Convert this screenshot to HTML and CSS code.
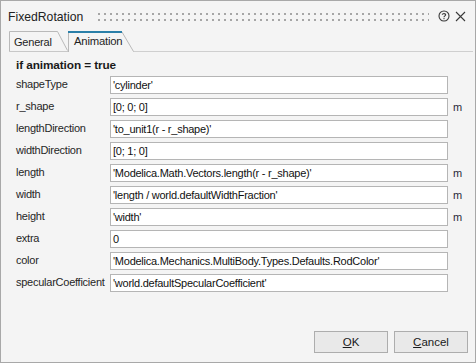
FILE: index.html
```html
<!DOCTYPE html>
<html>
<head>
<meta charset="utf-8">
<link rel="stylesheet" href="styles.css">
</head>
<body>
<div class="window">
  <div class="titlebar">
    <span class="title">FixedRotation</span>
    <div class="grip"></div>
    <svg class="icon help" width="12" height="12" viewBox="0 0 12 12">
      <circle cx="6" cy="6" r="5" fill="none" stroke="#3a3a3a" stroke-width="1.1"/>
      <path d="M4.3 4.7 C4.3 3.2 7.7 3.2 7.7 4.8 C7.7 5.9 6 5.9 6 7.2" fill="none" stroke="#3a3a3a" stroke-width="1.1"/>
      <rect x="5.45" y="8.1" width="1.1" height="1.1" fill="#3a3a3a"/>
    </svg>
    <svg class="icon close" width="11" height="11" viewBox="0 0 11 11">
      <path d="M1 1 L10 10 M10 1 L1 10" stroke="#3a3a3a" stroke-width="1.1"/>
    </svg>
  </div>
  <div class="tabstrip">
    <div class="tab tab-general">
      <svg class="tab-shape" width="59" height="20" viewBox="0 0 59 20">
        <path d="M0.5 20 L0.5 0.5 L48.5 0.5 L58.5 19.5" fill="#f4f4f4" stroke="#b9b9b9"/>
      </svg>
      <span class="tab-label">General</span>
    </div>
    <div class="tab tab-anim">
      <svg class="tab-shape" width="66" height="21" viewBox="0 0 66 21">
        <path d="M0.5 21 L0.5 1 L54 1 L65.5 20.5 L66 20.5" fill="#f4f4f4" stroke="#b9b9b9"/>
        <path d="M0 1 L54 1" stroke="#2a7fa8" stroke-width="2"/>
      </svg>
      <span class="tab-label">Animation</span>
    </div>
    <div class="tab-rest"></div>
  </div>
  <div class="panel">
    <div class="heading">if animation = true</div>
    <div class="grid">
      <div class="label">shapeType</div><div class="field">'cylinder'</div><div class="unit"></div>
      <div class="label">r_shape</div><div class="field">[0; 0; 0]</div><div class="unit">m</div>
      <div class="label">lengthDirection</div><div class="field">'to_unit1(r - r_shape)'</div><div class="unit"></div>
      <div class="label">widthDirection</div><div class="field">[0; 1; 0]</div><div class="unit"></div>
      <div class="label">length</div><div class="field">'Modelica.Math.Vectors.length(r - r_shape)'</div><div class="unit">m</div>
      <div class="label">width</div><div class="field">'length / world.defaultWidthFraction'</div><div class="unit">m</div>
      <div class="label">height</div><div class="field">'width'</div><div class="unit">m</div>
      <div class="label">extra</div><div class="field">0</div><div class="unit"></div>
      <div class="label">color</div><div class="field">'Modelica.Mechanics.MultiBody.Types.Defaults.RodColor'</div><div class="unit"></div>
      <div class="label">specularCoefficient</div><div class="field">'world.defaultSpecularCoefficient'</div><div class="unit"></div>
    </div>
  </div>
  <div class="footer">
    <button class="btn"><u>O</u>K</button>
    <button class="btn"><u>C</u>ancel</button>
  </div>
</div>
</body>
</html>
```
FILE: styles.css
```css
html, body {
  margin: 0;
  padding: 0;
  background: #f4f4f4;
}
.window {
  box-sizing: border-box;
  width: 476px;
  height: 363px;
  border: 1px solid #a8a8a8;
  background: #f4f4f4;
  display: flex;
  flex-direction: column;
  font-family: "Liberation Sans", Arial, sans-serif;
  color: #1f1f1f;
}
.titlebar {
  height: 30px;
  display: flex;
  align-items: center;
  padding: 0 9px 0 7px;
}
.title {
  font-size: 12.2px;
  color: #222;
  padding-top: 2px;
}
.grip {
  width: 334px;
  height: 8px;
  margin-left: 15px;
  margin-top: 1px;
  background-image:
    linear-gradient(to bottom, transparent 2px, #f4f4f4 2px),
    linear-gradient(to right, #a6a6a6 2px, transparent 2px);
  background-size: 6px 6px, 6px 6px;
}
.icon {
  display: block;
  flex: none;
}
.help {
  margin-left: 9px;
}
.close {
  margin-left: 5px;
}
.tabstrip {
  display: flex;
  height: 21px;
  padding-left: 8px;
  align-items: flex-end;
}
.tab {
  position: relative;
  font-size: 11px;
  letter-spacing: -0.2px;
}
.tab-shape {
  position: absolute;
  left: 0;
  bottom: 0;
  display: block;
}
.tab-label {
  position: relative;
}
.tab-general {
  width: 59px;
  height: 20px;
  box-sizing: border-box;
  padding: 4px 0 0 5px;
  border-bottom: 1px solid #c8c8c8;
}
.tab-general .tab-shape {
  bottom: 0;
}
.tab-anim {
  width: 66px;
  height: 21px;
  margin-left: 0;
  box-sizing: border-box;
  padding: 4px 0 0 6px;
  font-size: 11.3px;
}
.tab-rest {
  flex: 1;
  height: 0;
  border-bottom: 1px solid #cfcfcf;
  margin-right: 2px;
}
.panel {
  flex: 1;
  padding: 5px 0 0 15px;
}
.heading {
  font-weight: bold;
  font-size: 11.8px;
  letter-spacing: -0.1px;
  line-height: 16px;
  height: 17px;
  color: #1a1a1a;
}
.grid {
  display: grid;
  grid-template-columns: 94px 338px 1fr;
  grid-auto-rows: 18px;
  row-gap: 4px;
  margin-top: 2px;
}
.label, .field, .unit {
  font-size: 11px;
  letter-spacing: -0.25px;
  line-height: 16px;
}
.label {
  color: #262626;
  white-space: nowrap;
}
.field {
  box-sizing: border-box;
  border: 1px solid #b5b5b5;
  background: #fff;
  padding: 0 2px;
  color: #111;
  white-space: nowrap;
  overflow: hidden;
}
.unit {
  padding-left: 5px;
  color: #2a2a3a;
  line-height: 18px;
}
.footer {
  display: flex;
  justify-content: flex-end;
  gap: 6px;
  padding: 0 7px 9px 0;
}
.btn {
  width: 74px;
  height: 22px;
  box-sizing: border-box;
  border: 1px solid #adadad;
  background: #e9e9e9;
  font-family: "Liberation Sans", Arial, sans-serif;
  font-size: 11.5px;
  color: #1a1a1a;
  padding: 0;
  margin: 0;
}
```
